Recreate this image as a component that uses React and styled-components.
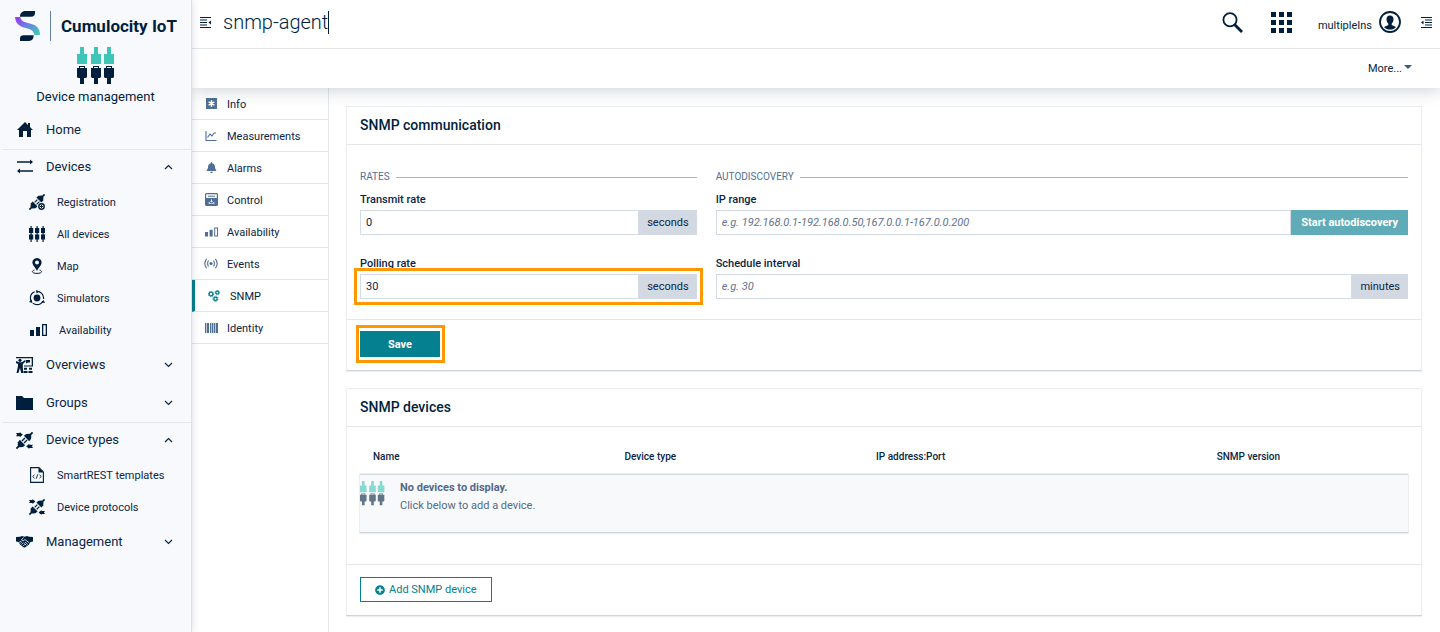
import React, { useState } from 'react';
import styled, { createGlobalStyle, css } from 'styled-components';
import { FaPlusCircle, FaBell } from 'react-icons/fa';

const navy = '#001f3d';
const text = '#0b2545';
const slate = '#4f6f96';
const teal = '#058090';
const line = '#e3e6eb';

const GlobalStyle = createGlobalStyle`
  *, *::before, *::after {
    box-sizing: border-box;
  }
  body {
    margin: 0;
    background: #fff;
    color: ${text};
    font-family: Roboto, 'Liberation Sans', sans-serif;
    font-size: 11px;
    line-height: 16px;
  }
  button, input {
    font: inherit;
    color: inherit;
  }
  a {
    color: inherit;
    text-decoration: none;
  }
`;

/* ---------- icons ---------- */

const Svg = styled.svg`
  display: block;
  flex: none;
  fill: currentColor;
`;

const Icon = ({ size = 16, width = size, height = size, box = '0 0 16 16', children }) => (
  <Svg width={width} height={height} viewBox={box} aria-hidden='true'>{children}</Svg>
);

const LogoIcon = () => (
  <Icon width={25} height={30} box='0 0 75 90'>
    <defs>
      <linearGradient id='ribbon' x1='0' y1='0' x2='1' y2='1'>
        <stop offset='0.1' stopColor='#9040f5' />
        <stop offset='0.5' stopColor='#6488e0' />
        <stop offset='0.95' stopColor='#42c8b8' />
      </linearGradient>
    </defs>
    <path fill={navy} d='M15 17C15 6 22 0 33 0H60V5C60 13 56 17 48 17Z' />
    <path fill='url(#ribbon)' d='M0 18H16C17 29 25 33 42 37C63 42 75 51 75 72H58C56 60 50 56 35 52C12 46 2 38 0 18Z' />
    <path fill={navy} d='M15 90V82C15 76 19 73 26 73H56C56 84 51 90 42 90Z' />
  </Icon>
);

const PlugsIcon = ({ size = 38 }) => (
  <Icon size={size} box='0 0 38 38'>
    {[0, 14, 27].map(x => (
      <g key={x}>
        <path fill='#3fc4b8' d={`M${x + 3} 0h4v7h3v10h-10v-10h3z`} />
        <path fill={navy} d={`M${x + 2} 19h6v2h2v9l-1 1h-2v6h-4v-6h-2l-1-1v-9h2zM${x + 3} 20v1h4v-1z`} fillRule='evenodd' />
      </g>
    ))}
  </Icon>
);

const HomeIcon = () => (
  <Icon>
    <path d='M8 0L0 8H2V15H6V9H10V15H14V8H16L13 5V1H11V3Z' />
  </Icon>
);

const ExchangeIcon = () => (
  <Icon>
    <path d='M0 2.3H13V0.5L16 3L13 5.5V3.7H0ZM16 12.7H3V14.5L0 12L3 9.5V11.3H16Z' />
  </Icon>
);

const Plug = () => (
  <>
    <path d='M0.4 15.6L4 12M12 4L15.6 0.4' stroke='currentColor' strokeWidth='1.7' />
    <path d='M3.6 7.4L8.6 12.4L6.4 14.2L3.2 14.4L1.6 12.8L1.8 9.6Z' />
    <path d='M7.4 3.6L12.4 8.6L14.2 6.4L14.4 3.2L12.8 1.6L9.6 1.8Z' />
    <path d='M5.6 8.4L8.4 5.6M7.6 10.4L10.4 7.6' stroke='currentColor' strokeWidth='1.3' />
  </>
);

const RegistrationIcon = () => (
  <Icon>
    <Plug />
    <circle cx='12.5' cy='12.5' r='4' fill='#f8f9fc' />
    <circle cx='12.5' cy='12.5' r='2.7' fill='none' stroke='currentColor' strokeWidth='1.4' />
    <path d='M12 11h1v1h1v1h-1v1h-1v-1h-1v-1h1z' />
  </Icon>
);

const PlugArrowsIcon = ({ size }) => (
  <Icon size={size}>
    <Plug />
    <path d='M0 1H3.5V0L6.4 2.6L3.5 5V4H0L1 2.5Z' />
    <path d='M16 15H12.5V16L9.6 13.4L12.5 11V12H16L15 13.5Z' />
  </Icon>
);

const AllDevicesIcon = () => (
  <Icon>
    {[0, 6, 12].map(x => (
      <path key={x} d={`M${x + 1.5} 0h1.2v2h1.5v5h-1.5v1.5h1.5v5h-1.5v2.5h-1.2v-2.5h-1.5v-5h1.5v-1.5h-1.5v-5h1.5z`} />
    ))}
  </Icon>
);

const MapIcon = () => (
  <Icon>
    <path fillRule='evenodd' d='M8 0C5 0 3.4 2.2 3.4 4.6C3.4 7.5 6.5 9.5 8 13C9.5 9.5 12.6 7.5 12.6 4.6C12.6 2.2 11 0 8 0ZM8 2.6A2 2 0 1 1 8 6.6A2 2 0 1 1 8 2.6Z' />
    <path fill='none' stroke='currentColor' d='M5.5 12C2 13 3 15.4 8 15.4S14 13 10.5 12' />
  </Icon>
);

const SimulatorsIcon = () => (
  <Icon>
    <circle cx='8' cy='8' r='3.4' />
    <circle cx='8' cy='8' r='6.6' fill='none' stroke='currentColor' strokeWidth='1.2' strokeDasharray='11.8 2' strokeDashoffset='-3' />
    <path d='M7 0L10 1.5L7.5 3.5ZM16 13L12.5 12.5L14.5 10ZM0 12L2.5 9.5L3.5 13Z' />
  </Icon>
);

const BarsIcon = ({ width = 17 }) => (
  <Icon width={width} height={12} box='0 0 17 12'>
    <path d='M0 6h4v6H0zM6 3h4v9H6z' />
    <path fillRule='evenodd' d='M12 0h5v12h-5zM13.3 1.3v9.4h2.4V1.3z' />
  </Icon>
);

const OverviewsIcon = () => (
  <Icon width={17} height={16} box='0 0 17 16'>
    <path d='M0 0H17V9H15.7V1.3H0Z' />
    <circle cx='4' cy='3.3' r='1.6' />
    <path d='M0 4L3 5.2H6L9 3L9.8 4.2L6.8 7V10L7.2 16H5.2L4 11L2.4 16H0.5L2 9V7L0 6Z' />
    <path d='M10 3h4v2.5h-2l-2 1z' />
    <path d='M8 8.4h9v1.2h-9zM8 10.8h3v2h-3zM13 10.8h3v2h-3zM7.5 14h4v2h-4zM12.5 14h4v2h-4z' />
  </Icon>
);

const FolderIcon = () => (
  <Icon width={17} height={14} box='0 0 17 14'>
    <path d='M0 0H6L8 2H17V14H0Z' />
  </Icon>
);

const HandshakeIcon = () => (
  <Icon width={17} height={12} box='0 0 17 12'>
    <path d='M0 1L4 0.8L6 0L8.5 0.8L11 0L13 0.8L17 1V5.5L14.5 6L13 8.5L9 11.5H7.8L4 8.5L2.5 6L0 5.5Z' />
    <path
      fill='none'
      stroke='#f8f9fc'
      strokeWidth='0.8'
      d='M7.5 1.5L5.5 4L7 5L9 3.5L13.5 7M3 6.5L4.5 5.2L5.5 6.2L4.2 7.6M5.6 8.6L7.6 6.6M7.2 10L9 8.2M9 6L11.8 8.4M8.4 7.4L10.4 9.4'
    />
  </Icon>
);

const TemplateIcon = () => (
  <Icon>
    <path fill='none' stroke='currentColor' strokeWidth='1.1' d='M1.6 0.6H10L14.4 5V15.4H1.6Z' />
    <path d='M9.5 0.5V5.5H14.5Z' />
    <path fill='none' stroke='currentColor' strokeWidth='0.9' d='M5.5 7.8L3.7 9.5L5.5 11.2M10.5 7.8L12.3 9.5L10.5 11.2M8.8 7.3L7.2 11.7' />
  </Icon>
);

const Chevron = ({ open }) => (
  <Icon width={9} height={6} box='0 0 9 6'>
    <path fill='none' stroke='currentColor' strokeWidth='1.2' d={open ? 'M1 5L4.5 1.5L8 5' : 'M1 1L4.5 4.5L8 1'} />
  </Icon>
);

const InfoIcon = () => (
  <Icon size={11} box='0 0 11 11'>
    <path d='M0 0h11v11H0z' />
    <path stroke='#fff' strokeWidth='1.5' d='M5.5 2.2V8.8M2.6 3.9L8.4 7.1M8.4 3.9L2.6 7.1' />
  </Icon>
);

const ChartIcon = () => (
  <Icon size={12} box='0 0 12 12'>
    <path fill='none' stroke='currentColor' strokeWidth='1.1' d='M1 1V10.5H11.5M2.5 7.5L5 4L7 6L9 3H11' />
  </Icon>
);

const ControlIcon = () => (
  <Icon width={13} height={13} box='0 0 13 13'>
    <path fillRule='evenodd' d='M1 0H12L13 1V12L12 13H1L0 12V1ZM1.2 1.2V5H11.8V1.2ZM6 6.5V8H5L6.5 9.5L8 8H7V6.5ZM3.7 8.7V10.7H9.3V8.7L7.5 10.2H5.5Z' />
    <path d='M3 2.7h7v1H3z' />
  </Icon>
);

const EventsIcon = () => (
  <Icon width={14} height={12} box='0 0 14 12'>
    <circle cx='7' cy='5.5' r='1.6' />
    <path fill='none' stroke='currentColor' strokeWidth='1.1' d='M4.5 2.5Q2.7 5.5 4.5 8.5M9.5 2.5Q11.3 5.5 9.5 8.5M2.6 0.8Q-1 5.5 2.6 10.2M11.4 0.8Q15 5.5 11.4 10.2' />
  </Icon>
);

const GearsIcon = () => (
  <Icon size={12} box='0 0 12 12'>
    <g fill='none' stroke='currentColor'>
      <circle cx='3' cy='4' r='1.9' strokeWidth='1.4' />
      <circle cx='3' cy='4' r='2.7' strokeWidth='0.8' strokeDasharray='1.1 1' />
      <circle cx='9.3' cy='2.6' r='1.5' strokeWidth='1.3' />
      <circle cx='9.3' cy='2.6' r='2.3' strokeWidth='0.7' strokeDasharray='1 0.8' />
      <circle cx='7.5' cy='8.8' r='1.7' strokeWidth='1.4' />
      <circle cx='7.5' cy='8.8' r='2.6' strokeWidth='0.8' strokeDasharray='1.1 0.9' />
    </g>
  </Icon>
);

const BarcodeIcon = () => (
  <Icon width={13} height={10} box='0 0 13 10'>
    <path d='M0 0h1.4v10H0zM2 0h2v10H2zM5 0h1.4v10H5zM7 0h1.4v10H7zM9 0h1.4v10H9zM11 0h2v10h-2z' />
  </Icon>
);

const IndentIcon = ({ end }) => (
  <Icon width={11} height={11} box='0 0 11 11'>
    <path d='M0 0h11v1H0zM0 10h11v1H0z' />
    <path d={end ? 'M4 2.5h7v1H4zM4 5h7v1H4zM4 7.5h7v1H4z' : 'M0 2.5h7v1H0zM0 5h7v1H0zM0 7.5h7v1H0z'} />
    <path d={end ? 'M2.5 3.5v4L0 5.5z' : 'M11 3.5v4L8.5 5.5z'} />
  </Icon>
);

const SearchIcon = () => (
  <Icon size={21} box='0 0 21 21'>
    <circle cx='8' cy='7.8' r='6.6' fill='none' stroke='currentColor' strokeWidth='1.8' />
    <path d='M12.5 12.5L20 20' stroke='currentColor' strokeWidth='2.8' />
  </Icon>
);

const AppsIcon = () => (
  <Icon size={21} box='0 0 21 21'>
    {[0, 8, 16].map(y => <path key={y} d={`M0 ${y}h5v5h-5zM8 ${y}h5v5h-5zM16 ${y}h5v5h-5z`} />)}
  </Icon>
);

const UserIcon = () => (
  <Icon size={22} box='0 0 22 22'>
    <circle cx='11' cy='11' r='10' fill='none' stroke='currentColor' strokeWidth='1.8' />
    <path d='M11 4.5C8.4 4.5 7.3 6.2 7.5 8.6C7.6 10.4 8.3 11.8 9.3 12.7V14L5 16C6.5 17.8 8.6 18.6 11 18.6S15.5 17.8 17 16L12.7 14V12.7C13.7 11.8 14.4 10.4 14.5 8.6C14.7 6.2 13.6 4.5 11 4.5Z' />
  </Icon>
);

const CaretIcon = () => (
  <Icon width={8} height={4} box='0 0 8 4'>
    <path fill='#355a87' d='M0 0H8L4 4Z' />
  </Icon>
);

/* ---------- navigator ---------- */

const Page = styled.div`
  display: flex;
  min-height: 100vh;
`;

const Navigator = styled.aside`
  position: relative;
  z-index: 3;
  flex: none;
  width: 192px;
  background: #f8f9fc;
  border-right: 1px solid #dfe2e7;
  box-shadow: 0 0 8px rgba(20, 40, 70, 0.16);
`;

const Brand = styled.div`
  display: flex;
  align-items: center;
  padding: 11px 0 0 15px;
  color: ${navy};
`;

const BrandName = styled.strong`
  margin-left: 10px;
  padding-left: 10px;
  border-left: 1px solid #6482a8;
  font-size: 17px;
  font-weight: 700;
  line-height: 30px;
  white-space: nowrap;
`;

const AppBadge = styled.div`
  display: flex;
  flex-direction: column;
  align-items: center;
  gap: 4px;
  padding: 6px 0;
  font-size: 13px;
  line-height: 16px;
  color: ${navy};
`;

const Group = styled.div`
  margin-left: 3px;
  ${props => props.$divided && css`border-top: 1px solid ${line};`}
`;

const groupRow = css`
  display: flex;
  align-items: center;
  gap: 13px;
  width: 100%;
  height: ${props => props.$open ? '34px' : '38px'};
  padding: 0 18px 0 13px;
  border: 0;
  background: none;
  font-size: 13px;
  text-align: left;
  cursor: pointer;
`;

const GroupLink = styled.a`${groupRow}`;
const GroupToggle = styled.button`${groupRow}`;

const IconSlot = styled.span`
  display: flex;
  justify-content: center;
  flex: none;
  width: ${props => props.$width}px;
  color: ${props => props.$color || navy};
`;

const Grow = styled.span`
  flex: 1;
`;

// small captions sit slightly below the middle of their icon
const Caption = styled.span`
  padding-top: 2px;
`;

const SubList = styled.ul`
  margin: 0;
  padding: 2px 0 0 26px;
  list-style: none;
`;

const SubLink = styled.a`
  display: flex;
  align-items: center;
  gap: 12px;
  height: 32px;
`;

const navigation = [
  { label: 'Home', icon: <HomeIcon /> },
  {
    label: 'Devices',
    icon: <ExchangeIcon />,
    divided: true,
    items: [
      { label: 'Registration', icon: <RegistrationIcon /> },
      { label: 'All devices', icon: <AllDevicesIcon /> },
      { label: 'Map', icon: <MapIcon /> },
      { label: 'Simulators', icon: <SimulatorsIcon /> },
      { label: 'Availability', icon: <BarsIcon />, iconWidth: 18 }
    ]
  },
  { label: 'Overviews', icon: <OverviewsIcon />, collapsed: true },
  { label: 'Groups', icon: <FolderIcon />, collapsed: true },
  {
    label: 'Device types',
    icon: <PlugArrowsIcon size={17} />,
    divided: true,
    items: [
      { label: 'SmartREST templates', icon: <TemplateIcon /> },
      { label: 'Device protocols', icon: <PlugArrowsIcon /> }
    ]
  },
  { label: 'Management', icon: <HandshakeIcon />, collapsed: true }
];

const NavGroup = ({ group }) => {
  const head = (
    <>
      <IconSlot $width={17}>{group.icon}</IconSlot>
      <Grow>{group.label}</Grow>
    </>
  );

  if (!group.items && !group.collapsed) {
    return <Group><GroupLink href='#'>{head}</GroupLink></Group>;
  }

  return (
    <Group $divided={group.divided}>
      <GroupToggle type='button' $open={!!group.items} aria-expanded={!!group.items}>
        {head}
        <Chevron open={!!group.items} />
      </GroupToggle>
      {group.items && (
        <SubList>
          {group.items.map(item => (
            <li key={item.label}>
              <SubLink href='#'>
                <IconSlot $width={item.iconWidth || 16}>{item.icon}</IconSlot>
                <Caption>{item.label}</Caption>
              </SubLink>
            </li>
          ))}
        </SubList>
      )}
    </Group>
  );
};

/* ---------- header ---------- */

const Main = styled.div`
  display: flex;
  flex: 1;
  flex-direction: column;
  min-width: 0;
`;

const Header = styled.header`
  position: relative;
  z-index: 2;
  background: #fff;
  box-shadow: 0 2px 16px rgba(20, 40, 60, 0.22);
`;

const TitleBar = styled.div`
  display: flex;
  align-items: center;
  height: 49px;
  padding: 0 8px 4px;
  border-bottom: 1px solid ${line};
  color: ${navy};
`;

const IconButton = styled.button`
  display: flex;
  align-items: center;
  margin: 0 0 0 ${props => props.$gap || 0}px;
  padding: 0;
  border: 0;
  background: none;
  color: inherit;
  cursor: pointer;
`;

const TitleInput = styled.input`
  field-sizing: content;
  height: 23px;
  margin: 0 auto 0 12px;
  padding: 0;
  border: 0;
  border-right: 1px solid ${navy};
  background: none;
  font-size: 20px;
  font-weight: 300;
  line-height: 23px;
  outline: 0;
`;

const UserName = styled.span`
  margin-right: 7px;
  padding-top: 8px;
`;

const ActionBar = styled.div`
  display: flex;
  align-items: center;
  justify-content: flex-end;
  height: 39px;
  padding-right: 28px;
`;

const MoreButton = styled(IconButton)`
  gap: 2px;

  svg {
    margin-bottom: 4px;
  }
`;

/* ---------- tabs ---------- */

const Body = styled.div`
  display: flex;
  flex: 1;
`;

const Tabs = styled.nav`
  flex: none;
  width: 137px;
  border-right: 1px solid ${line};
`;

const Tab = styled.a`
  display: flex;
  align-items: center;
  gap: 9px;
  height: 32px;
  padding-left: 12px;
  border-bottom: 1px solid ${line};
  color: ${props => props.$active ? navy : text};
  ${props => props.$active && css`border-left: 3px solid ${teal};`}
`;

const tabs = [
  { label: 'Info', icon: <InfoIcon /> },
  { label: 'Measurements', icon: <ChartIcon /> },
  { label: 'Alarms', icon: <FaBell size={11} /> },
  { label: 'Control', icon: <ControlIcon /> },
  { label: 'Availability', icon: <BarsIcon width={13} /> },
  { label: 'Events', icon: <EventsIcon /> },
  { label: 'SNMP', icon: <GearsIcon />, active: true },
  { label: 'Identity', icon: <BarcodeIcon /> }
];

/* ---------- content ---------- */

const Content = styled.main`
  display: flex;
  flex: 1;
  flex-direction: column;
  gap: 17px;
  min-width: 0;
  padding: 18px 18px 16px 17px;
`;

const Card = styled.section`
  border: 1px solid #eceef1;
  border-bottom-color: #cdd4dc;
  box-shadow: 0 1px 1px rgba(20, 40, 60, 0.08);
`;

const CardTitle = styled.h2`
  margin: 0;
  padding: 0 13px;
  border-bottom: 1px solid ${line};
  font-size: 14px;
  font-weight: 500;
  line-height: 37px;
  color: ${navy};
`;

const CardFooter = styled.footer`
  padding: 11px 13px 13px;
  border-top: 1px solid ${line};
`;

const FormGrid = styled.div`
  display: grid;
  grid-template-columns: repeat(3, minmax(0, 1fr));
  gap: 19px;
  padding: 24px 13px 20px;
`;

const FieldGroup = styled.div`
  display: flex;
  flex-direction: column;
  gap: 21px;
  grid-column: span ${props => props.$span};
`;

const Legend = styled.div`
  display: flex;
  align-items: center;
  gap: 6px;
  margin-bottom: -14px;
  font-size: 10px;
  text-transform: uppercase;
  color: ${slate};

  &::after {
    content: '';
    flex: 1;
    height: 1px;
    background: #a5b4c6;
  }
`;

const Label = styled.label`
  display: block;
  margin-bottom: 2px;
  font-weight: 500;
`;

const InputGroup = styled.div`
  display: flex;
  height: 25px;
  ${props => props.$marked && css`
    outline: 3px solid #ff9800;
    outline-offset: 3px;
  `}
`;

const TextInput = styled.input`
  flex: 1;
  min-width: 0;
  padding: 1px 5px 0;
  border: 1px solid #d5dbe4;
  border-radius: 0;
  background: #fff;

  &::placeholder {
    color: #5f738d;
    font-style: italic;
    opacity: 1;
  }
`;

const Addon = styled.span`
  padding: 0 8px;
  background: #d3d9e2;
  line-height: 25px;
`;

const Button = styled.button`
  padding: 1px 10px 0;
  border: 0;
  background: ${teal};
  color: #fff;
  font-weight: 700;
  cursor: pointer;

  &:disabled {
    background: #5facb8;
    cursor: default;
  }
`;

const SaveButton = styled(Button)`
  position: relative;
  display: block;
  width: 80px;
  height: 26px;

  &::after {
    content: '';
    position: absolute;
    inset: -6px -5px -6px -4px;
    border: 3px solid #ff9800;
  }
`;

const AddButton = styled.button`
  display: flex;
  align-items: center;
  gap: 4px;
  height: 25px;
  margin-top: 1px;
  padding: 0 14px;
  border: 1px solid ${teal};
  background: #fff;
  color: ${teal};
  cursor: pointer;
`;

const TableWrap = styled.div`
  padding: 12px 13px 31px;
`;

const Table = styled.table`
  width: 100%;
  border-collapse: collapse;
  table-layout: fixed;
`;

const HeadCell = styled.th`
  width: ${props => props.$width};
  height: 35px;
  padding: 0 13px;
  font-size: 10px;
  font-weight: 500;
  text-align: left;
`;

const EmptyCell = styled.td`
  padding: 0;
`;

const EmptyState = styled.div`
  display: flex;
  gap: 15px;
  height: 59px;
  padding-top: 4px;
  border-top: 1px solid #d5dbe4;
  border-bottom: 1px solid #cdd4dc;
  box-shadow: 0 0 0 1px #eceef1, 0 1px 1px rgba(20, 40, 60, 0.12);
  background: #f8f9fb;
  line-height: 18px;
  color: #52698a;

  svg {
    margin-top: 2px;
    opacity: 0.6;
  }
`;

const EmptyText = styled.p`
  margin: 0;
`;

const Field = ({ id, label, placeholder, initial = '', marked, children }) => {
  const [value, setValue] = useState(initial);
  return (
    <div>
      <Label htmlFor={id}>{label}</Label>
      <InputGroup $marked={marked}>
        <TextInput id={id} value={value} placeholder={placeholder} onChange={e => setValue(e.target.value)} />
        {children}
      </InputGroup>
    </div>
  );
};

const Communication = () => (
  <Card>
    <CardTitle>SNMP communication</CardTitle>
    <FormGrid>
      <FieldGroup $span={1}>
        <Legend>Rates</Legend>
        <Field id='transmit' label='Transmit rate' initial='0'><Addon>seconds</Addon></Field>
        <Field id='polling' label='Polling rate' initial='30' marked><Addon>seconds</Addon></Field>
      </FieldGroup>
      <FieldGroup $span={2}>
        <Legend>Autodiscovery</Legend>
        <Field id='range' label='IP range' placeholder='e.g. 192.168.0.1-192.168.0.50,167.0.0.1-167.0.0.200'>
          <Button type='button' disabled>Start autodiscovery</Button>
        </Field>
        <Field id='interval' label='Schedule interval' placeholder='e.g. 30'><Addon>minutes</Addon></Field>
      </FieldGroup>
    </FormGrid>
    <CardFooter>
      <SaveButton type='button'>Save</SaveButton>
    </CardFooter>
  </Card>
);

const Devices = () => (
  <Card>
    <CardTitle>SNMP devices</CardTitle>
    <TableWrap>
      <Table>
        <thead>
          <tr>
            <HeadCell $width='24%'>Name</HeadCell>
            <HeadCell $width='24%'>Device type</HeadCell>
            <HeadCell $width='32.5%'>IP address:Port</HeadCell>
            <HeadCell>SNMP version</HeadCell>
          </tr>
        </thead>
        <tbody>
          <tr>
            <EmptyCell colSpan={4}>
              <EmptyState>
                <PlugsIcon size={25} />
                <EmptyText>
                  <strong>No devices to display.</strong><br />
                  Click below to add a device.
                </EmptyText>
              </EmptyState>
            </EmptyCell>
          </tr>
        </tbody>
      </Table>
    </TableWrap>
    <CardFooter>
      <AddButton type='button'><FaPlusCircle size={10} />Add SNMP device</AddButton>
    </CardFooter>
  </Card>
);

export default function App() {
  const [title, setTitle] = useState('snmp-agent');

  return (
    <Page>
      <GlobalStyle />
      <Navigator>
        <Brand>
          <LogoIcon />
          <BrandName>Cumulocity IoT</BrandName>
        </Brand>
        <AppBadge>
          <PlugsIcon />
          Device management
        </AppBadge>
        <nav>
          {navigation.map(group => <NavGroup key={group.label} group={group} />)}
        </nav>
      </Navigator>
      <Main>
        <Header>
          <TitleBar>
            <IconButton type='button' aria-label='Toggle navigator'><IndentIcon /></IconButton>
            <TitleInput aria-label='Device name' value={title} onChange={e => setTitle(e.target.value)} />
            <IconButton type='button' aria-label='Search'><SearchIcon /></IconButton>
            <IconButton type='button' aria-label='Applications' $gap={28}><AppsIcon /></IconButton>
            <IconButton type='button' $gap={26}>
              <UserName>multipleIns</UserName>
              <UserIcon />
            </IconButton>
            <IconButton type='button' aria-label='Toggle drawer' $gap={20}><IndentIcon end /></IconButton>
          </TitleBar>
          <ActionBar>
            <MoreButton type='button'>More...<CaretIcon /></MoreButton>
          </ActionBar>
        </Header>
        <Body>
          <Tabs>
            {tabs.map(tab => (
              <Tab key={tab.label} href='#' $active={tab.active}>
                <IconSlot $width={14} $color={tab.active ? teal : slate}>{tab.icon}</IconSlot>
                <Caption>{tab.label}</Caption>
              </Tab>
            ))}
          </Tabs>
          <Content>
            <Communication />
            <Devices />
          </Content>
        </Body>
      </Main>
    </Page>
  );
}
